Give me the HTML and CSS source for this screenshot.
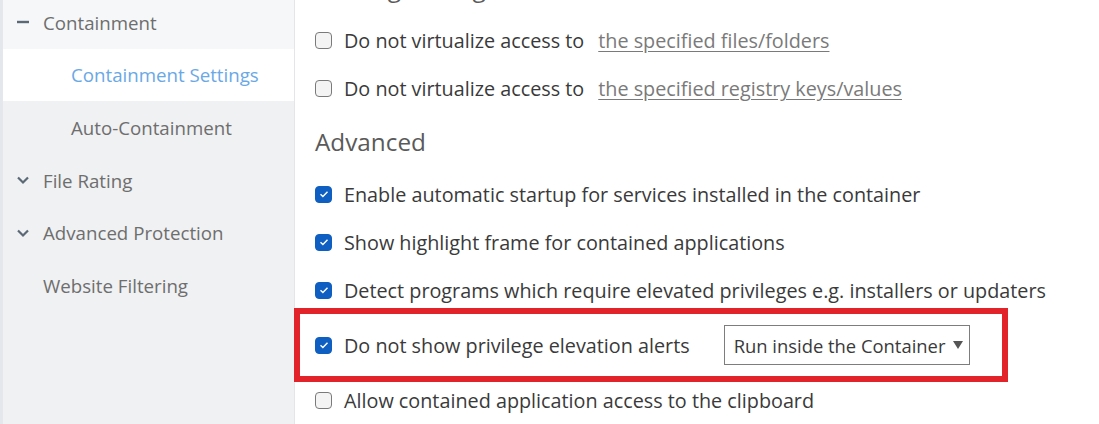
FILE: index.html
```html
<!DOCTYPE html>
<html>
<head>
<meta charset="utf-8">
<link rel="stylesheet" href="styles.css">
</head>
<body>
<div class="app">
  <div class="strip"></div>
  <nav class="sidebar">
    <div class="nav-list">
      <div class="nav-item parent open">
        <span class="nav-icon"><svg width="14" height="14" viewBox="0 0 14 14"><path d="M1 7h12" stroke="#5b6875" stroke-width="2.4"/></svg></span>
        <span>Containment</span>
      </div>
      <div class="nav-item child active"><span>Containment Settings</span></div>
      <div class="nav-item child"><span>Auto-Containment</span></div>
      <div class="nav-item parent">
        <span class="nav-icon"><svg width="14" height="14" viewBox="0 0 14 14"><path d="M2 4.5l5 5 5-5" fill="none" stroke="#5b6875" stroke-width="2.2"/></svg></span>
        <span>File Rating</span>
      </div>
      <div class="nav-item parent">
        <span class="nav-icon"><svg width="14" height="14" viewBox="0 0 14 14"><path d="M2 4.5l5 5 5-5" fill="none" stroke="#5b6875" stroke-width="2.2"/></svg></span>
        <span>Advanced Protection</span>
      </div>
      <div class="nav-item parent"><span class="nav-icon"></span><span>Website Filtering</span></div>
    </div>
  </nav>
  <main class="main">
    <div class="heading top-heading">Sharing Settings</div>
    <div class="row">
      <span class="cb"></span>
      <span class="label">Do not virtualize access to</span>
      <a class="link">the specified files/folders</a>
    </div>
    <div class="row">
      <span class="cb"></span>
      <span class="label">Do not virtualize access to</span>
      <a class="link">the specified registry keys/values</a>
    </div>
    <div class="heading">Advanced</div>
    <div class="row">
      <span class="cb checked"><svg width="12" height="12" viewBox="0 0 12 12"><path d="M2.5 6.2l2.4 2.3 4.6-4.8" fill="none" stroke="#ffffff" stroke-width="1.4"/></svg></span>
      <span class="label">Enable automatic startup for services installed in the container</span>
    </div>
    <div class="row">
      <span class="cb checked"><svg width="12" height="12" viewBox="0 0 12 12"><path d="M2.5 6.2l2.4 2.3 4.6-4.8" fill="none" stroke="#ffffff" stroke-width="1.4"/></svg></span>
      <span class="label">Show highlight frame for contained applications</span>
    </div>
    <div class="row">
      <span class="cb checked"><svg width="12" height="12" viewBox="0 0 12 12"><path d="M2.5 6.2l2.4 2.3 4.6-4.8" fill="none" stroke="#ffffff" stroke-width="1.4"/></svg></span>
      <span class="label">Detect programs which require elevated privileges e.g. installers or updaters</span>
    </div>
    <div class="row row-select">
      <span class="cb checked"><svg width="12" height="12" viewBox="0 0 12 12"><path d="M2.5 6.2l2.4 2.3 4.6-4.8" fill="none" stroke="#ffffff" stroke-width="1.4"/></svg></span>
      <span class="label">Do not show privilege elevation alerts</span>
      <div class="select"><span>Run inside the Container</span><span class="arrow"></span></div>
      <div class="highlight"></div>
    </div>
    <div class="row">
      <span class="cb"></span>
      <span class="label">Allow contained application access to the clipboard</span>
    </div>
  </main>
</div>
</body>
</html>
```

FILE: styles.css
```css
html, body {
  margin: 0;
  padding: 0;
  background: #ffffff;
  overflow: hidden;
}
body {
  font-family: "Open Sans", "Noto Sans", sans-serif;
  width: 1099px;
  height: 424px;
}
.app {
  display: flex;
  height: 424px;
  overflow: hidden;
}
.strip {
  width: 3px;
  flex: 0 0 3px;
  background: #e4e7eb;
}
.sidebar {
  width: 291px;
  flex: 0 0 291px;
  background: #f0f1f3;
  border-right: 1px solid #e3e5e8;
}
.nav-list {
  margin-top: -4px;
  display: flex;
  flex-direction: column;
}
.nav-item {
  height: 52.6px;
  display: flex;
  align-items: center;
  font-size: 18.7px;
  color: #6e6e6e;
}
.nav-item.parent {
  padding-left: 13px;
  gap: 13px;
}
.nav-item.open {
  background: #f6f7f9;
}
.nav-icon {
  width: 14px;
  height: 14px;
  display: flex;
}
.nav-item.child {
  padding-left: 68px;
}
.nav-item.active {
  background: #ffffff;
  color: #6aa8e6;
}
.main {
  flex: 1;
  display: flex;
  flex-direction: column;
  padding-left: 20px;
  color: #3a3a3a;
}
.heading {
  height: 58px;
  display: flex;
  align-items: center;
  font-size: 24.3px;
  color: #5a5a5a;
}
.top-heading {
  margin-top: -41px;
}
.row {
  height: 48px;
  display: flex;
  align-items: center;
  font-size: 19.8px;
  position: relative;
  white-space: nowrap;
}
.cb {
  width: 17px;
  height: 17px;
  border: 1.5px solid #7a7a7a;
  border-radius: 4px;
  background: #f4f4f4;
  box-sizing: border-box;
  margin-right: 12px;
  display: flex;
  align-items: center;
  justify-content: center;
  flex: 0 0 auto;
}
.cb.checked {
  background: #0f5fc2;
  border-color: #0f5fc2;
}
.link {
  margin-left: 14px;
  color: #7a7a7a;
  text-decoration: underline;
  text-underline-offset: 3px;
}
.row-select {
  height: 62px;
}
.select {
  margin-left: 34px;
  width: 246px;
  height: 40px;
  box-sizing: border-box;
  border: 1px solid #7d7d7d;
  display: flex;
  align-items: center;
  gap: 8px;
  padding: 0 0 0 9px;
  font-size: 18.4px;
  color: #3a3a3a;
}
.arrow {
  width: 0;
  height: 0;
  border-left: 5px solid transparent;
  border-right: 5px solid transparent;
  border-top: 8px solid #555;
}
.highlight {
  position: absolute;
  left: -21px;
  top: -6px;
  width: 714px;
  height: 74px;
  box-sizing: border-box;
  border: 6px solid #e3232a;
  pointer-events: none;
}
```
